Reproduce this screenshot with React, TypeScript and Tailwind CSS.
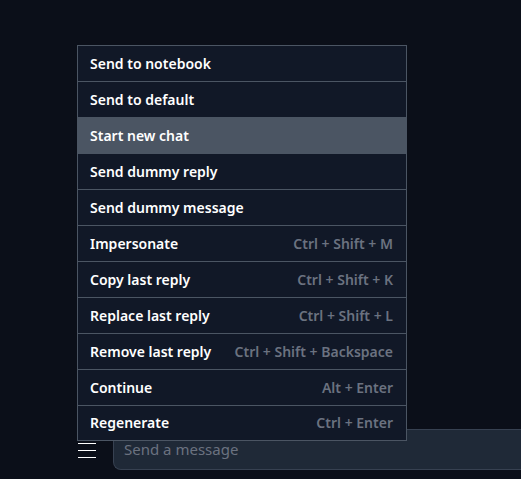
const items: [string, string][] = [
  ["Send to notebook", ""],
  ["Send to default", ""],
  ["Start new chat", ""],
  ["Send dummy reply", ""],
  ["Send dummy message", ""],
  ["Impersonate", "Ctrl + Shift + M"],
  ["Copy last reply", "Ctrl + Shift + K"],
  ["Replace last reply", "Ctrl + Shift + L"],
  ["Remove last reply", "Ctrl + Shift + Backspace"],
  ["Continue", "Alt + Enter"],
  ["Regenerate", "Ctrl + Enter"],
];

const App = () => {
  return (
    <div className="relative w-[521px] h-[479px] bg-[#0b0f19] overflow-hidden font-['Noto_Sans',sans-serif]">
      <div className="absolute bottom-[9px] left-0 right-0 flex items-center">
        <div className="w-[113px] flex justify-start pl-[78px]">
          <div className="flex flex-col gap-[6px] w-[18px] pt-[1px]">
            <span className="h-px bg-white" />
            <span className="h-px bg-white" />
            <span className="h-px bg-white" />
          </div>
        </div>
        <div className="flex-1 h-[41px] rounded-l-lg border border-r-0 border-[#374151] bg-[#1f2937] flex items-center px-[10px] text-[15px] text-[#6b7280]">
          Send a message
        </div>
      </div>

      <div className="absolute left-[77px] top-[45px] w-[330px] border border-[#4b5563] bg-[#111827] flex flex-col">
        {items.map(([label, key], i) => (
          <div
            key={label}
            className={
              "flex items-center justify-between pl-3 pr-[13px] text-sm font-semibold " +
              (i === 0 ? "h-[35px] " : i === items.length - 1 ? "h-[35px] border-t border-[#4b5563] " : "h-[36px] border-t border-[#4b5563] ") +
              (i === 2 ? "bg-[#4b5563]" : "")
            }
          >
            <span className="text-white">{label}</span>
            <span className="text-[#6b7280]">{key}</span>
          </div>
        ))}
      </div>
    </div>
  );
};

export default App;
